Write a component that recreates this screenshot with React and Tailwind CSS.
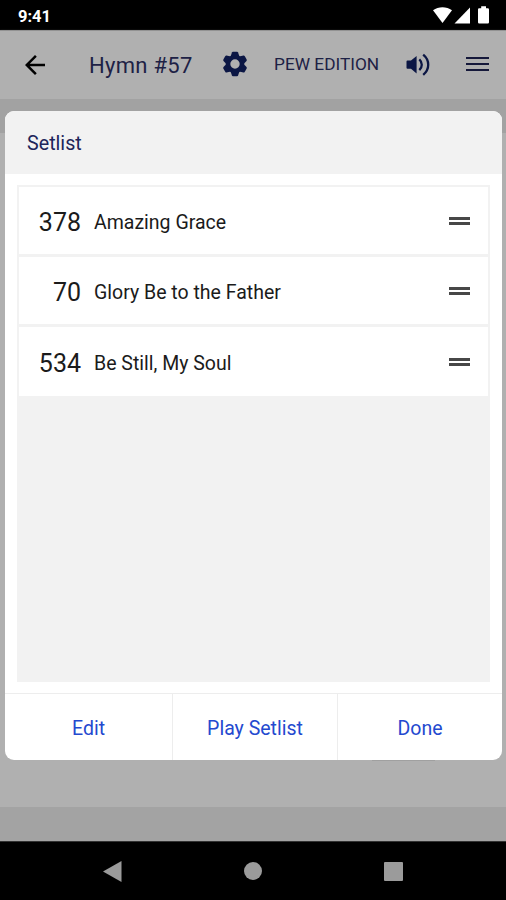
import { MdArrowBack } from "react-icons/md"

const songs = [
  { number: 378, title: "Amazing Grace" },
  { number: 70, title: "Glory Be to the Father" },
  { number: 534, title: "Be Still, My Soul" },
]

function StatusBar() {
  return (
    <div className="flex h-[30px] shrink-0 items-center justify-between bg-black pl-[18px] pr-[16px] text-white">
      <span className="pt-[4px] text-[16.5px] leading-none font-bold">9:41</span>
      <svg width="58" height="30" viewBox="0 0 58 30" fill="currentColor">
        <path d="M1 10.3C6.5 6.2 14.5 6.2 20 10.3L10.5 23z" />
        <path d="M38 7.5V23.5H22.5z" />
        <path d="M46 9.5a1.2 1.2 0 0 1 1.2-1.2H49.2V6.3h4.8v2h1.8a1.2 1.2 0 0 1 1.2 1.2v12.8a1.2 1.2 0 0 1-1.2 1.2h-8.6a1.2 1.2 0 0 1-1.2-1.2z" />
      </svg>
    </div>
  )
}

function GearIcon() {
  return (
    <svg width="26" height="26" viewBox="-13 -13 26 26" fill="#0b1644">
      <circle r="7" fill="none" stroke="#0b1644" strokeWidth="4.6" />
      {[0, 60, 120, 180, 240, 300].map((angle) => (
        <path
          key={angle}
          transform={`rotate(${angle})`}
          d="M-4.4-7.4L-3.1-11.5a1.2 1.2 0 0 1 1.1-.8h4a1.2 1.2 0 0 1 1.1.8L4.4-7.4z"
        />
      ))}
    </svg>
  )
}

function VolumeIcon() {
  return (
    <svg width="24" height="24" viewBox="0 0 24 24" fill="none" stroke="#0b1644" strokeWidth="2.3">
      <path d="M.5 8.6a1 1 0 0 1 1-1H5L10.6 3v17.4L5 15.8H1.5a1 1 0 0 1-1-1z" fill="#0b1644" stroke="none" />
      <path d="M13.3 6.4c3.3 2.9 3.3 7.9 0 10.8" />
      <path d="M17.2 1.7c6.7 5.6 6.7 14.6 0 20.2" />
    </svg>
  )
}

function TopBar() {
  return (
    <header className="flex h-[69px] shrink-0 items-center border-t border-[#929292] bg-[#b0b0b0] pl-[20px] pr-[17px] text-[#1d2145] shadow-[0_1px_2px_#8e8e8e]">
      <MdArrowBack size={30} className="text-black" />
      <h1 className="ml-[39px] w-[133px] pt-[2px] text-[22px] leading-none tracking-[0.3px] whitespace-nowrap">Hymn #57</h1>
      <div className="-mt-[2px]">
        <GearIcon />
      </div>
      <span className="ml-[26px] w-[132px] text-[17.3px] leading-none whitespace-nowrap">PEW EDITION</span>
      <div className="-mt-px">
        <VolumeIcon />
      </div>
      <div className="-mt-[2px] ml-auto flex w-[23px] flex-col gap-[4px]">
        <div className="h-[2px] bg-[#15183a]" />
        <div className="h-[2px] bg-[#15183a]" />
        <div className="h-[2px] bg-[#15183a]" />
      </div>
    </header>
  )
}

function NavBar() {
  return (
    <nav className="flex h-[59px] shrink-0 items-center justify-between border-t border-[#333] bg-black pl-[103px] pr-[103px]">
      <svg width="19" height="21" viewBox="0 0 19 21" fill="#9b9b9b">
        <path d="M0 10.5L18.5 0v21z" />
      </svg>
      <div className="size-[18px] rounded-full bg-[#9b9b9b]" />
      <div className="size-[19px] rounded-[1px] bg-[#9b9b9b]" />
    </nav>
  )
}

function SongRow({ song }) {
  return (
    <li className="flex h-[67px] items-center bg-white pr-[18px] text-[#1b1b1b] last:h-[69px]">
      <span className="w-[62px] pt-[4px] text-right text-[25px] leading-none">{song.number}</span>
      <span className="ml-[13px] grow pt-[4px] text-[19.5px] leading-none">{song.title}</span>
      <div className="flex w-[21px] flex-col gap-[2px]">
        <div className="h-[3px] bg-[#474747]" />
        <div className="h-[3px] bg-[#474747]" />
      </div>
    </li>
  )
}

function SetlistDialog() {
  return (
    <div className="absolute top-[111px] left-[5px] flex h-[649px] w-[497px] flex-col overflow-hidden rounded-[9px] bg-white">
      <h2 className="flex h-[63px] shrink-0 items-center bg-[#f2f2f2] pt-[2px] pl-[22px] text-[19.7px] leading-none text-[#20255a]">
        Setlist
      </h2>
      <div className="mx-[12px] mt-[11px] mb-[11px] grow border-2 border-[#f2f2f2] bg-[#f2f2f2]">
        <ul className="flex flex-col gap-[3px]">
          {songs.map((song) => (
            <SongRow key={song.number} song={song} />
          ))}
        </ul>
      </div>
      <div className="flex h-[67px] shrink-0 divide-x divide-[#ededed] border-t border-[#ededed] text-[19.5px] text-[#2449cf]">
        <button className="w-[168px] pt-[4px]">Edit</button>
        <button className="w-[165px] pt-[4px]">Play Setlist</button>
        <button className="grow pt-[4px]">Done</button>
      </div>
    </div>
  )
}

export default function App() {
  return (
    <div className="relative flex h-[900px] w-[506px] flex-col overflow-hidden bg-[#b0b0b0] font-[Roboto,sans-serif]">
      <StatusBar />
      <TopBar />
      <div className="h-[34px] shrink-0 bg-[#a2a2a2]" />
      <div className="grow" />
      <div className="h-[34px] shrink-0 bg-[#a3a3a3]" />
      <NavBar />
      {/* edge of the page content showing under the dialog */}
      <div className="absolute top-[760px] left-[372px] h-px w-[63px] bg-[#a0a0a0]" />
      <SetlistDialog />
    </div>
  )
}
